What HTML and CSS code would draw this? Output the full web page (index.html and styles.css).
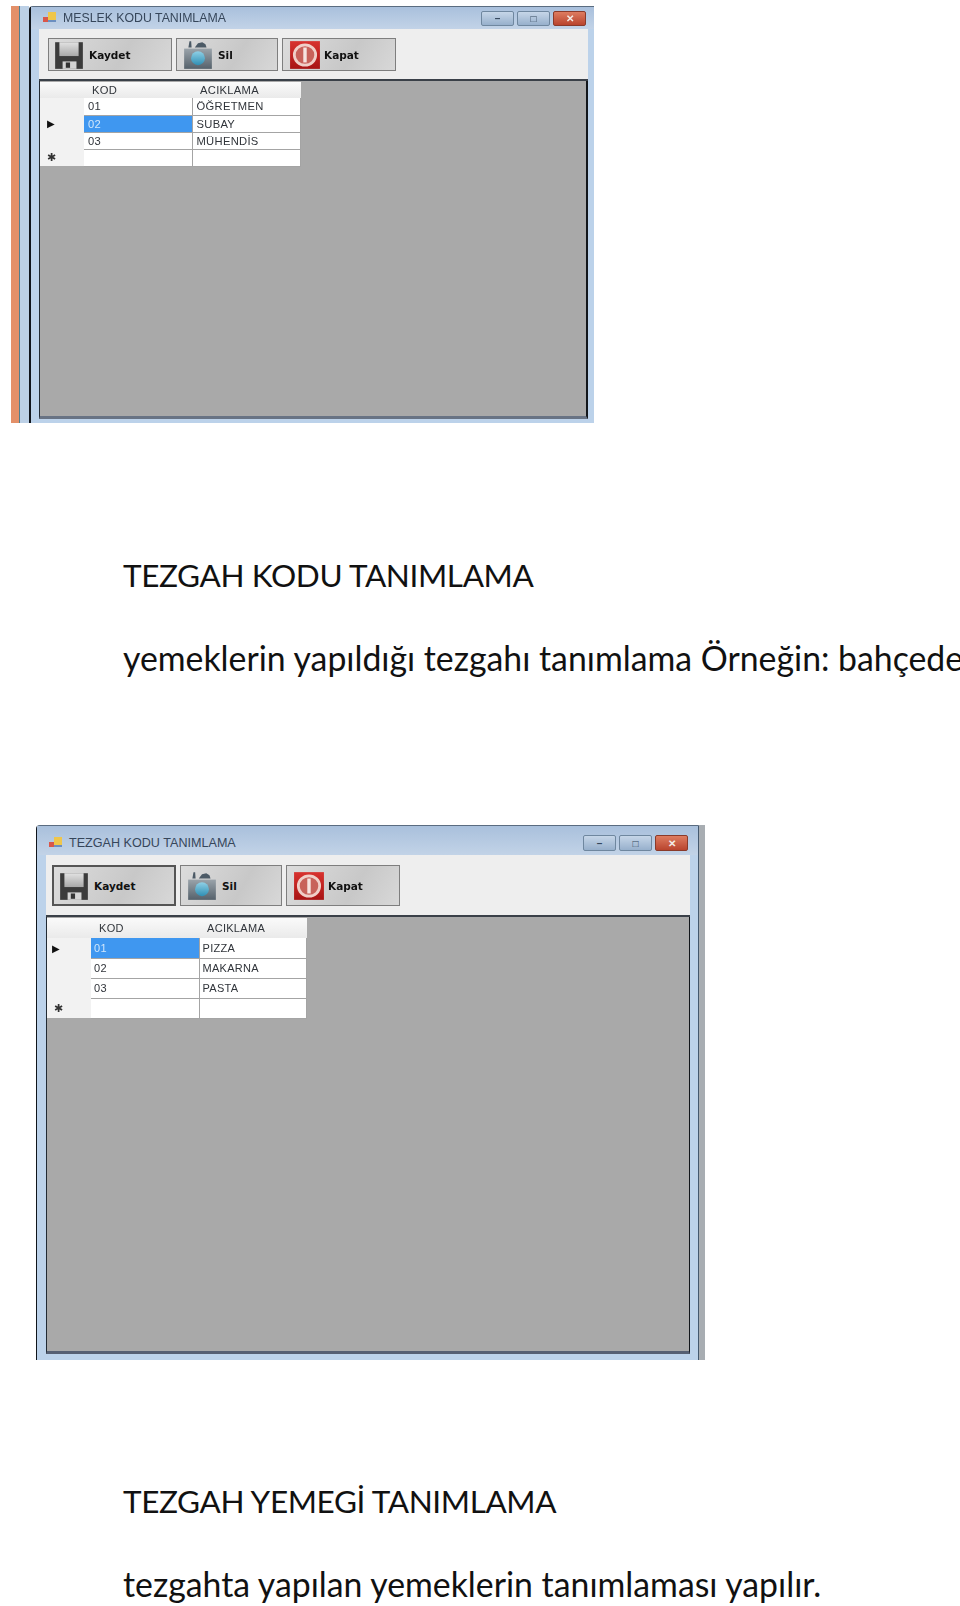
FILE: index.html
```html
<!DOCTYPE html>
<html lang="en">
<head>
    <meta charset="UTF-8">
    <title>Tezgah Kodu Tanimlama</title>
    <link rel="stylesheet" href="styles.css">
</head>
<body>
    <svg class="defs" width="0" height="0">
        <defs>
            <linearGradient id="btnRed" x1="0" y1="0" x2="0" y2="1">
                <stop offset="0" stop-color="#d8322e"/>
                <stop offset="1" stop-color="#a81414"/>
            </linearGradient>
            <linearGradient id="lens" x1="0" y1="0" x2="0" y2="1">
                <stop offset="0" stop-color="#8fd0e6"/>
                <stop offset="1" stop-color="#2f8fb4"/>
            </linearGradient>
            <linearGradient id="panel" x1="0" y1="0" x2="0" y2="1">
                <stop offset="0" stop-color="#e2e2e2"/>
                <stop offset="1" stop-color="#a8a8a8"/>
            </linearGradient>
            <linearGradient id="body" x1="0" y1="0" x2="0" y2="1">
                <stop offset="0" stop-color="#9aa3aa"/>
                <stop offset="1" stop-color="#55616b"/>
            </linearGradient>
            <symbol id="icon-save" viewBox="0 0 30 28">
                <path d="M2 2h26v25H2z" fill="#3b3b3b"/>
                <path d="M6 2h18v13H6z" fill="url(#panel)"/>
                <path d="M9 20h13v7H9z" fill="#d4d4d4"/>
                <path d="M12 21h4v5h-4z" fill="#333"/>
            </symbol>
            <symbol id="icon-sil" viewBox="0 0 30 28">
                <path d="M6 7l1-6 1.600 0 .4 6zM12 7l3-4 4-1 3 2 1 3z" fill="#4c5a66"/>
                <path d="M2 8h26v19H2z" fill="url(#body)"/>
                <circle cx="15" cy="17" r="6.500" fill="url(#lens)"/>
            </symbol>
            <symbol id="icon-kapat" viewBox="0 0 30 28">
                <path d="M1 1h28v26H1z" fill="url(#btnRed)"/>
                <ellipse cx="15" cy="14" rx="10" ry="9.500" fill="#c8625a" stroke="#f0cfc8" stroke-width="2.600"/>
                <path d="M13.400 7h3.200v14h-3.200z" fill="#f6e4e0"/>
            </symbol>
            <symbol id="icon-app" viewBox="0 0 14 12">
                <path d="M0 5h5v5H0z" fill="#d9564a"/>
                <path d="M5 0h8v8H5z" fill="#efc64b"/>
                <path d="M5 8h8v2H5z" fill="#6b8fc0"/>
            </symbol>
        </defs>
    </svg>

    <div class="shot shot-first">
        <div class="edge-orange"></div>
        <div class="edge-blue"></div>
        <section class="window">
            <header class="titlebar">
                <svg class="app-icon"><use href="#icon-app"/></svg>
                <span class="title">MESLEK KODU TANIMLAMA</span>
                <div class="win-btns">
                    <span class="win-btn">&#8211;</span>
                    <span class="win-btn">&#9633;</span>
                    <span class="win-btn win-close">&#10005;</span>
                </div>
            </header>
            <div class="toolbar">
                <button class="tool tool-save"><svg class="tool-icon"><use href="#icon-save"/></svg>Kaydet</button>
                <button class="tool tool-sil"><svg class="tool-icon"><use href="#icon-sil"/></svg>Sil</button>
                <button class="tool tool-kapat"><svg class="tool-icon"><use href="#icon-kapat"/></svg>Kapat</button>
            </div>
            <div class="grid-area">
                <table class="grid">
                    <tr class="head"><th></th><th>KOD</th><th>ACIKLAMA</th></tr>
                    <tr><th></th><td>01</td><td>ÖĞRETMEN</td></tr>
                    <tr><th class="marker">&#9654;</th><td class="selected">02</td><td>SUBAY</td></tr>
                    <tr><th></th><td>03</td><td>MÜHENDİS</td></tr>
                    <tr><th class="marker marker-new">&#10033;</th><td></td><td></td></tr>
                </table>
            </div>
        </section>
    </div>

    <h2 class="heading heading-first">TEZGAH KODU TANIMLAMA</h2>
    <p class="line">yemeklerin yapıldığı tezgahı tanımlama Örneğin: bahçede</p>

    <div class="shot shot-second">
        <section class="window">
            <header class="titlebar">
                <svg class="app-icon"><use href="#icon-app"/></svg>
                <span class="title">TEZGAH KODU TANIMLAMA</span>
                <div class="win-btns">
                    <span class="win-btn">&#8211;</span>
                    <span class="win-btn">&#9633;</span>
                    <span class="win-btn win-close">&#10005;</span>
                </div>
            </header>
            <div class="toolbar">
                <button class="tool tool-save"><svg class="tool-icon"><use href="#icon-save"/></svg>Kaydet</button>
                <button class="tool tool-sil"><svg class="tool-icon"><use href="#icon-sil"/></svg>Sil</button>
                <button class="tool tool-kapat"><svg class="tool-icon"><use href="#icon-kapat"/></svg>Kapat</button>
            </div>
            <div class="grid-area">
                <table class="grid">
                    <tr class="head"><th></th><th>KOD</th><th>ACIKLAMA</th></tr>
                    <tr><th class="marker">&#9654;</th><td class="selected">01</td><td>PIZZA</td></tr>
                    <tr><th></th><td>02</td><td>MAKARNA</td></tr>
                    <tr><th></th><td>03</td><td>PASTA</td></tr>
                    <tr><th class="marker marker-new">&#10033;</th><td></td><td></td></tr>
                </table>
            </div>
        </section>
        <div class="edge-gray"></div>
    </div>

    <h2 class="heading heading-second">TEZGAH YEMEGİ TANIMLAMA</h2>
    <p class="line">tezgahta yapılan yemeklerin tanımlaması yapılır.</p>
</body>
</html>
```

FILE: styles.css
```css
html, body {
    margin: 0;
    padding: 0;
    height: 1606px;
    overflow: hidden;
    background: #fff;
}
body {
    font-family: Lato, "Open Sans", sans-serif;
    color: #111;
}
.defs {
    display: block;
}

/* screenshots pasted in the document */
.shot {
    display: flex;
    filter: blur(0.45px);
}
.shot-first {
    margin: 6px 0 0 11px;
    height: 417px;
    width: 583px;
}
.shot-second {
    margin: 147px 0 0 36px;
    height: 535px;
    width: 669px;
}
.edge-orange {
    width: 8px;
    background: #e39069;
    border-right: 1px solid #4f7f8f;
}
.edge-blue {
    width: 9px;
    background: #bcd0e6;
}
.edge-gray {
    width: 6px;
    background: #a8adb2;
}
.window {
    flex: 1;
    display: flex;
    flex-direction: column;
    border-left: 2px solid #10151c;
    border-top: 1px solid #5a6c80;
    background: #bcd2ea;
    padding: 0 6px 6px 8px;
    border-radius: 4px 0 0 0;
}
.shot-first .window {
    padding-bottom: 4px;
}
.shot-second .window {
    border-left-width: 1px;
    border-right: 1px solid #44586e;
    padding: 0 8px 6px 9px;
}

/* title bar */
.titlebar {
    display: flex;
    align-items: center;
    height: 22px;
    margin: 0 -6px 0 -8px;
    padding: 0 8px 0 12px;
    background: linear-gradient(#a9c0dc, #c2d3e7);
}
.shot-second .titlebar {
    box-sizing: border-box;
    height: 29px;
    margin: 0 -8px 0 -9px;
    padding: 5px 10px 0 12px;
}
.app-icon {
    width: 14px;
    height: 12px;
    margin-right: 6px;
}
.title {
    font: 12.3px "Liberation Sans", Arial, sans-serif;
    color: #36465a;
}
.shot-second .title {
    font-size: 12.6px;
}
.win-btns {
    display: flex;
    gap: 3px;
    margin-left: auto;
}
.win-btn {
    display: flex;
    align-items: center;
    justify-content: center;
    width: 31px;
    height: 13px;
    font: bold 10px "Liberation Sans", Arial, sans-serif;
    color: #34475c;
    background: linear-gradient(#c6d6e8, #97b0cc);
    border: 1px solid #6f879f;
    border-radius: 2px;
}
.win-close {
    color: #f4ece8;
    background: linear-gradient(#de7c60, #b9442e);
    border-color: #8a3a2a;
}
.shot-second .win-btn {
    height: 14px;
}

/* toolbar */
.toolbar {
    display: flex;
    gap: 4px;
    height: 52px;
    box-sizing: border-box;
    padding: 9px 9px 8px;
    background: #eeeeee;
    border-bottom: 2px solid #3a4048;
}
.shot-second .toolbar {
    height: 62px;
    gap: 4px;
    padding: 10px 6px 9px;
}
.tool {
    display: flex;
    align-items: center;
    gap: 4px;
    padding: 0 0 0 4px;
    font: bold 10.5px "DejaVu Sans", sans-serif;
    color: #111;
    border: 1px solid #7e7e7e;
    background: linear-gradient(120deg, #dcdcdc, #c8c8c8 60%, #d8d8d8);
}
.tool-icon {
    width: 32px;
    height: 30px;
    flex: none;
}
.tool-save { width: 124px; }
.tool-sil { width: 102px; padding-left: 5px; }
.tool-kapat { width: 114px; padding-left: 6px; gap: 3px; }
.shot-second .tool-save { border: 2px solid #555; }

/* data grid */
.grid-area {
    flex: 1;
    background: #a9a9a9;
    border-left: 1px solid #222a33;
    border-right: 2px solid #12161b;
    border-bottom: 3px solid #687384;
    padding-top: 1px;
}
.shot-second .grid-area {
    border-left-width: 1px;
    border-right-width: 1px;
    border-bottom: 3px solid #565f72;
}
.grid {
    border-collapse: collapse;
    table-layout: fixed;
    width: 261px;
    font: 11.2px "Liberation Sans", Arial, sans-serif;
    color: #30343a;
}
.grid th, .grid td {
    height: 17px;
    padding: 0 0 0 4px;
    box-sizing: border-box;
    text-align: left;
    font-weight: normal;
    letter-spacing: 0.3px;
}
.grid td {
    background: #fff;
    border: 1px solid #a4a4a4;
    border-width: 0 1px 1px 0;
}
.grid th {
    background: #f3f3f3;
}
.grid th:first-child {
    width: 44px;
    padding: 0 0 0 7px;
    background: #f2f2f2;
}
.grid th:nth-child(2) {
    width: 108px;
}
.grid .head th {
    height: 16px;
    padding-left: 8px;
    background: linear-gradient(#fafafa, #eaeaea);
}
.grid .marker {
    font-size: 10px;
    color: #111;
}
.grid .marker-new {
    font-size: 11px;
    color: #333;
}
.grid .selected {
    background: #3f97f0;
    color: #cfe6fb;
}
.shot-second .grid {
    width: 260px;
    font-size: 11px;
}
.shot-second .grid th, .shot-second .grid td {
    height: 20px;
}
.shot-second .grid .head th {
    height: 20px;
}
.shot-second .grid td {
    padding-left: 3px;
}
.shot-second .grid th.marker {
    padding-left: 5px;
}
.shot-second .grid th.marker-new {
    padding-left: 7px;
}

/* document text */
.heading, .line {
    margin: 0 0 0 123px;
    font-family: Lato, "Open Sans", sans-serif;
    font-size: 33.8px;
    font-weight: normal;
    line-height: 40px;
    white-space: nowrap;
}
.heading {
    font-size: 31.5px;
    letter-spacing: -0.38px;
}
.heading-first {
    margin-top: 132px;
}
.line {
    margin-top: 43px;
}
.heading-second {
    margin-top: 121px;
}
```
